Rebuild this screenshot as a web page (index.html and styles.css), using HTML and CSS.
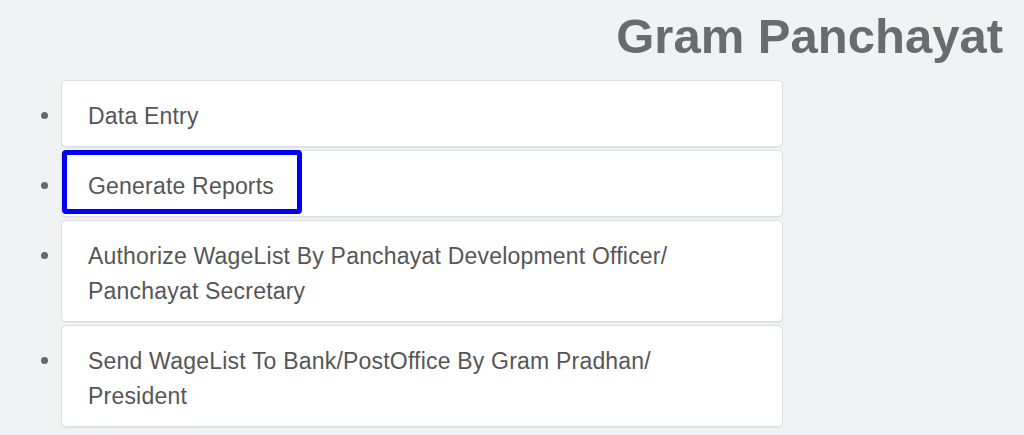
FILE: index.html
```html
<!DOCTYPE html>
<html lang="en">
<head>
<meta charset="utf-8">
<title>Gram Panchayat</title>
<link rel="stylesheet" href="styles.css">
</head>
<body>
  <h1 class="title">Gram Panchayat</h1>
  <ul class="menu">
    <li class="menu-row">
      <span class="bullet"></span>
      <div class="card"><a class="card-link" href="#">Data Entry</a></div>
    </li>
    <li class="menu-row">
      <span class="bullet"></span>
      <div class="card"><a class="card-link" href="#">Generate Reports</a><span class="focus-ring"></span></div>
    </li>
    <li class="menu-row">
      <span class="bullet"></span>
      <div class="card"><a class="card-link" href="#">Authorize WageList By Panchayat Development Officer/ Panchayat Secretary</a></div>
    </li>
    <li class="menu-row">
      <span class="bullet"></span>
      <div class="card"><a class="card-link" href="#">Send WageList To Bank/PostOffice By Gram Pradhan/ President</a></div>
    </li>
  </ul>
</body>
</html>
```

FILE: styles.css
```css
html, body {
  margin: 0;
  padding: 0;
  background: #f1f2f4;
}

body {
  font-family: "Liberation Sans", Arial, Helvetica, sans-serif;
  height: 435px;
  overflow: hidden;
}

.title {
  margin: 9px 21px 0 0;
  text-align: right;
  font-size: 49px;
  line-height: 54px;
  font-weight: bold;
  color: #6a6b6f;
}

.menu {
  list-style: none;
  margin: 17px 0 0 0;
  padding: 0;
  display: flex;
  flex-direction: column;
  gap: 3px;
}

.menu-row {
  display: flex;
  align-items: flex-start;
}

.bullet {
  flex: none;
  width: 7px;
  height: 7px;
  border-radius: 50%;
  background: #666769;
  margin: 32px 13px 0 41px;
}

.card {
  position: relative;
  width: 722px;
  box-sizing: border-box;
  background: #ffffff;
  border: 1px solid #dedfe1;
  border-radius: 5px;
  box-shadow: 0 1px 1px rgba(0, 0, 0, 0.06);
  padding: 18px 50px 12px 26px;
}

.card-link {
  display: block;
  font-size: 23px;
  line-height: 35px;
  letter-spacing: 0.2px;
  color: #555657;
  text-decoration: none;
}

.focus-ring {
  position: absolute;
  left: 0;
  top: -1px;
  width: 240px;
  height: 64px;
  box-sizing: border-box;
  border: 5px solid #0000f2;
  border-radius: 4px;
  pointer-events: none;
}
```
